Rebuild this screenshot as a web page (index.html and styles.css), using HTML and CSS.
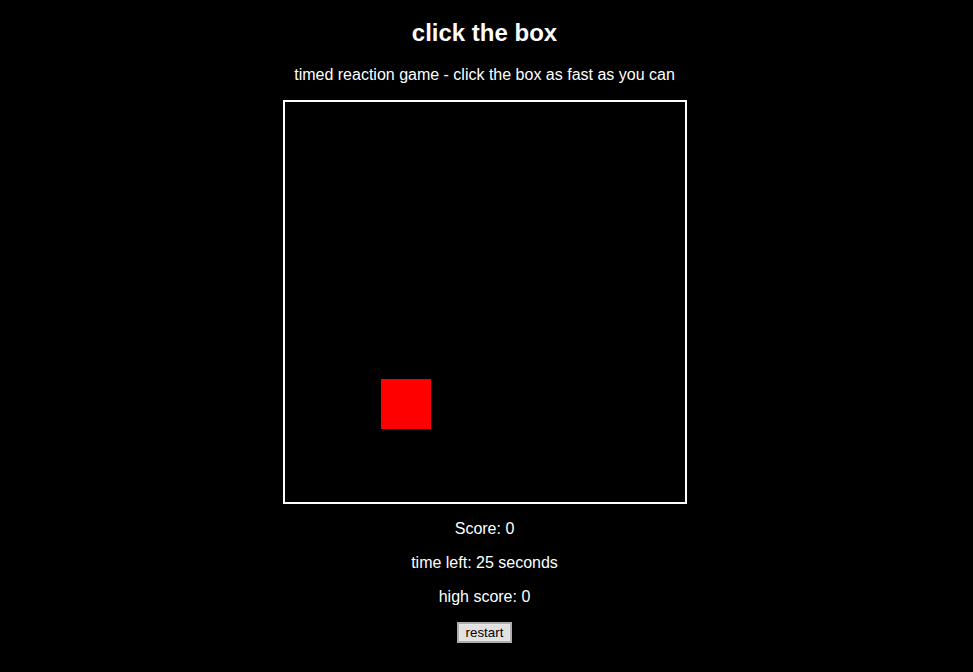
FILE: index.html
```html
<!DOCTYPE html>
<html>
<head>
<meta charset="utf-8">
<title>click the box</title>
<link rel="stylesheet" href="styles.css">
</head>
<body>
<main class="page">
  <h1 class="title">click the box</h1>
  <p class="subtitle">timed reaction game - click the box as fast as you can</p>
  <div class="arena">
    <div class="target"></div>
  </div>
  <p class="stat stat-first">Score: 0</p>
  <p class="stat">time left: 25 seconds</p>
  <p class="stat">high score: 0</p>
  <button class="restart" type="button">restart</button>
</main>
</body>
</html>
```

FILE: styles.css
```css
html, body {
  margin: 0;
  padding: 0;
  background: #000;
}
body {
  color: #fff;
  font-family: "Liberation Sans", Arial, sans-serif;
}
.page {
  display: flex;
  flex-direction: column;
  align-items: center;
  padding-top: 19px;
  padding-right: 4px;
}
.title {
  font-size: 24px;
  font-weight: bold;
  line-height: 28px;
  margin: 0;
}
.subtitle {
  font-size: 16px;
  line-height: 18px;
  margin: 19px 0 16px;
}
.arena {
  position: relative;
  width: 400px;
  height: 400px;
  border: 2px solid #fff;
  background: #000;
}
.target {
  position: absolute;
  left: 96px;
  top: 277px;
  width: 50px;
  height: 50px;
  background: #ff0000;
}
.stat {
  font-size: 16px;
  line-height: 18px;
  margin: 16px 0 0;
}
.restart {
  margin-top: 16px;
  font-family: "Liberation Sans", Arial, sans-serif;
  font-size: 13.333px;
  line-height: 15px;
  height: 21px;
  padding: 0 6.5px;
  background: #e1e1e1;
  color: #000;
  border: 2px solid #adadad;
  border-radius: 0;
  box-shadow: inset 0 0 0 1px #e8e8e8;
}
```
